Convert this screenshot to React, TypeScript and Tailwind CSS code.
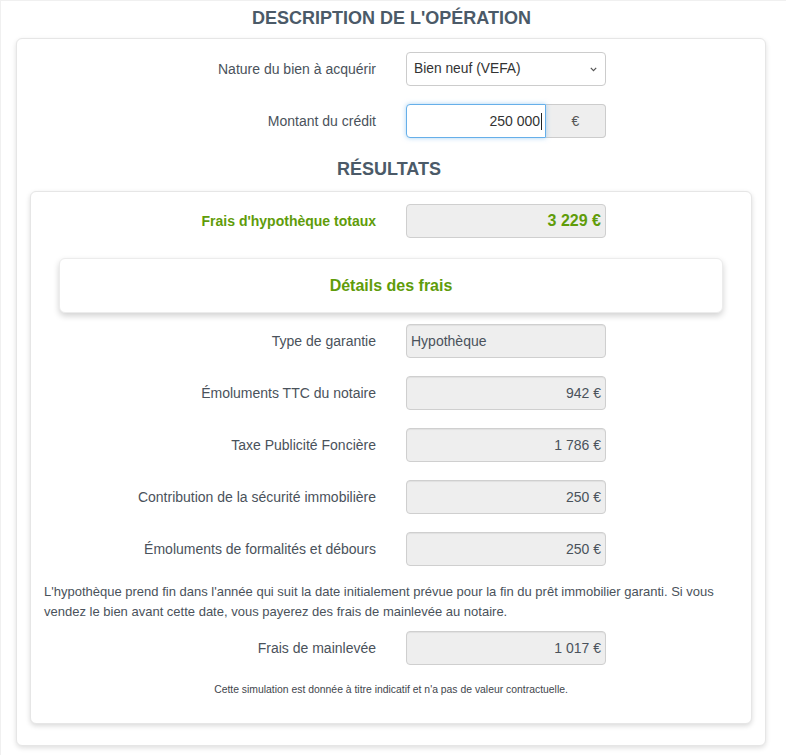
import React from "react";

const font = { fontFamily: '"Liberation Sans", Arial, sans-serif' };

function Label({ children, green = false }: { children: React.ReactNode; green?: boolean }) {
  return (
    <div
      className={
        "shrink-0 text-right text-[14px] leading-[20px] " +
        (green ? "font-bold text-[#5f9c0a]" : "text-[#4a525b]")
      }
    >
      {children}
    </div>
  );
}

function ReadOnly({ value, left = false }: { value: string; left?: boolean }) {
  return (
    <div
      className={
        "w-[200px] h-[34px] rounded-[4px] border border-[#cfcfcf] bg-[#eeeeee] px-[4px] flex items-center text-[14px] text-[#4a525b] shadow-[inset_0_1px_1px_rgba(0,0,0,0.06)] " +
        (left ? "justify-start" : "justify-end")
      }
    >
      {value}
    </div>
  );
}

function Row({
  label,
  children,
  labelW,
  green = false,
  className = "",
}: {
  label: string;
  children: React.ReactNode;
  labelW: string;
  green?: boolean;
  className?: string;
}) {
  return (
    <div className={"flex items-center " + className}>
      <div className={labelW + " flex justify-end"}>
        <Label green={green}>{label}</Label>
      </div>
      <div className="ml-[30px]">{children}</div>
    </div>
  );
}

export default function App() {
  const inW = "w-[345px]";
  return (
    <div
      style={font}
      className="w-[786px] h-[755px] bg-white border-t border-l border-[#f0f0f0] overflow-hidden"
    >
      <div className="h-[33px] flex items-center justify-center">
        <h1 className="text-[18px] leading-[22px] font-bold text-[#4b5a68] pt-[1px] pr-[4px]">
          DESCRIPTION DE L'OPÉRATION
        </h1>
      </div>

      <div className="ml-[15px] mt-[4px] w-[750px] rounded-[6px] border border-[#e6e6e6] bg-white shadow-[0_2px_5px_rgba(0,0,0,0.13)] pt-[13px] pb-[21px]">
        <Row label="Nature du bien à acquérir" labelW="w-[359px]">
          <div className="relative w-[200px] h-[34px] rounded-[4px] border border-[#cccccc] bg-white flex items-center pl-[7px] text-[13.8px] text-[#333]">
            Bien neuf (VEFA)
            <svg
              className="absolute right-[8px] top-[14px]"
              width="7"
              height="5"
              viewBox="0 0 7 5"
              fill="none"
            >
              <path d="M0.8 0.8 L3.5 3.6 L6.2 0.8" stroke="#555" strokeWidth="1.2" />
            </svg>
          </div>
        </Row>

        <Row label="Montant du crédit" labelW="w-[359px]" className="mt-[18px]">
          <div className="flex w-[200px] h-[34px]">
            <div className="w-[140px] h-[34px] rounded-l-[4px] border border-[#66afe9] bg-white shadow-[0_0_5px_rgba(102,175,233,0.55)] flex items-center justify-end pr-[3px] text-[14px] text-[#333] relative z-10">
              250 000
              <span className="inline-block w-[1px] h-[17px] bg-[#222] ml-[1px]" />
            </div>
            <div className="flex-1 h-[34px] rounded-r-[4px] border border-l-0 border-[#cccccc] bg-[#eeeeee] flex items-center justify-center text-[14px] text-[#555]">
              €
            </div>
          </div>
        </Row>

        <h2 className="text-center text-[18px] leading-[22px] font-bold text-[#4b5a68] mt-[20px] mb-[11px] pr-[4px]">
          RÉSULTATS
        </h2>

        <div className="mx-[13px] rounded-[6px] border border-[#e6e6e6] bg-white shadow-[0_2px_5px_rgba(0,0,0,0.15)] pt-[12px] pb-[27px]">
          <Row label="Frais d'hypothèque totaux" labelW={inW} green>
            <div className="w-[200px] h-[34px] rounded-[4px] border border-[#cfcfcf] bg-[#eeeeee] pr-[4px] flex items-center justify-end text-[16px] font-bold text-[#5f9c0a]">
              3 229 €
            </div>
          </Row>

          <div className="mx-[28px] mt-[20px] h-[55px] rounded-[6px] border border-[#ececec] bg-white shadow-[0_3px_6px_rgba(0,0,0,0.18)] flex items-center justify-center">
            <span className="text-[16px] font-bold text-[#5f9c0a]">Détails des frais</span>
          </div>

          <Row label="Type de garantie" labelW={inW} className="mt-[11px]">
            <ReadOnly value="Hypothèque" left />
          </Row>
          <Row label="Émoluments TTC du notaire" labelW={inW} className="mt-[18px]">
            <ReadOnly value="942 €" />
          </Row>
          <Row label="Taxe Publicité Foncière" labelW={inW} className="mt-[18px]">
            <ReadOnly value="1 786 €" />
          </Row>
          <Row label="Contribution de la sécurité immobilière" labelW={inW} className="mt-[18px]">
            <ReadOnly value="250 €" />
          </Row>
          <Row label="Émoluments de formalités et débours" labelW={inW} className="mt-[18px]">
            <ReadOnly value="250 €" />
          </Row>

          <p className="mt-[16px] mx-[13px] text-[13px] leading-[20px] text-[#4a525b]">
            L'hypothèque prend fin dans l'année qui suit la date initialement prévue pour la fin du prêt
            immobilier garanti. Si vous vendez le bien avant cette date, vous payerez des frais de
            mainlevée au notaire.
          </p>

          <Row label="Frais de mainlevée" labelW={inW} className="mt-[9px]">
            <ReadOnly value="1 017 €" />
          </Row>

          <p className="mt-[19px] text-center text-[10.4px] leading-[12px] text-[#3f464d]">
            Cette simulation est donnée à titre indicatif et n'a pas de valeur contractuelle.
          </p>
        </div>
      </div>
    </div>
  );
}
